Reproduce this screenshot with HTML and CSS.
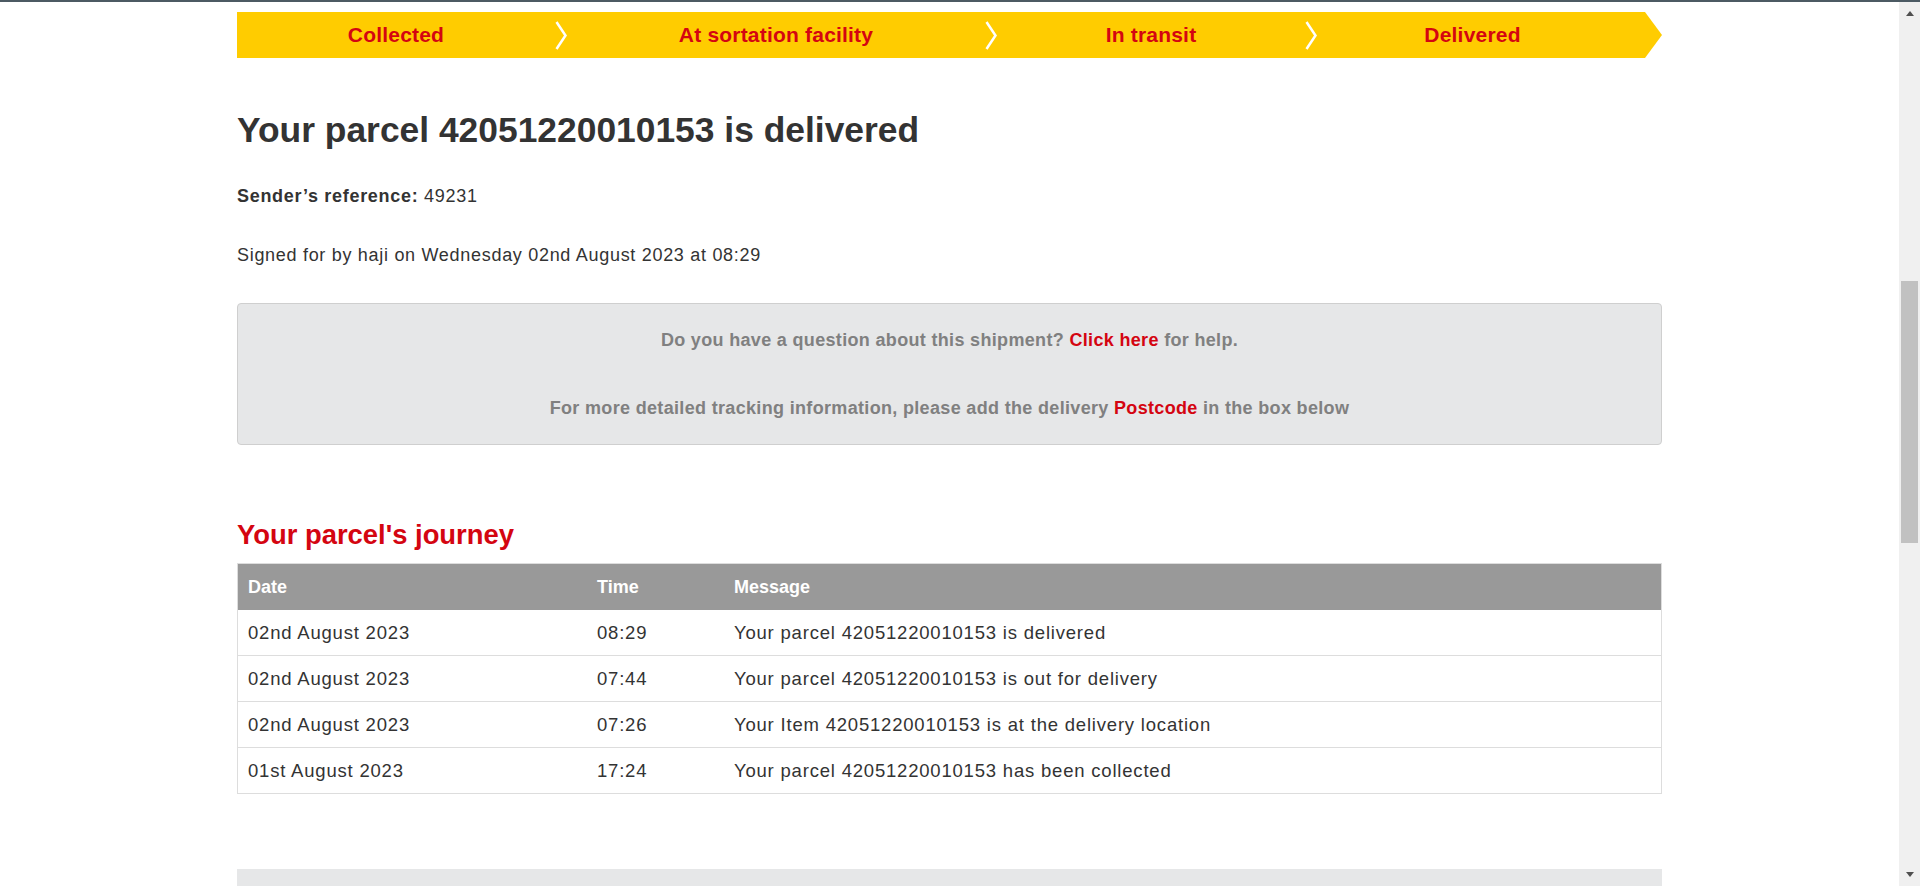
FILE: index.html
```html
<!DOCTYPE html>
<html lang="en">
<head>
<meta charset="utf-8">
<title>Track your parcel</title>
<link rel="stylesheet" href="styles.css">
</head>
<body>
<div class="page">
  <main class="main">
    <div class="container">
      <nav class="progress">
        <div class="step">Collected</div>
        <svg class="chev" viewBox="0 0 12 29" width="12" height="29"><polyline points="1.5,1 10.5,14.5 1.5,28" /></svg>
        <div class="step">At sortation facility</div>
        <svg class="chev" viewBox="0 0 12 29" width="12" height="29"><polyline points="1.5,1 10.5,14.5 1.5,28" /></svg>
        <div class="step">In transit</div>
        <svg class="chev" viewBox="0 0 12 29" width="12" height="29"><polyline points="1.5,1 10.5,14.5 1.5,28" /></svg>
        <div class="step step-last">Delivered</div>
      </nav>

      <h1 class="title">Your parcel 42051220010153 is delivered</h1>
      <p class="ref"><strong>Sender’s reference:</strong> 49231</p>
      <p class="signed">Signed for by haji on Wednesday 02nd August 2023 at 08:29</p>

      <section class="info">
        <p class="info-line">Do you have a question about this shipment? <a class="red" href="#">Click here</a> for help.</p>
        <p class="info-line info-line2">For more detailed tracking information, please add the delivery <span class="red">Postcode</span> in the box below</p>
      </section>

      <h2 class="journey">Your parcel's journey</h2>
      <table class="events">
        <thead>
          <tr><th class="c-date">Date</th><th class="c-time">Time</th><th>Message</th></tr>
        </thead>
        <tbody>
          <tr><td>02nd August 2023</td><td>08:29</td><td>Your parcel 42051220010153 is delivered</td></tr>
          <tr><td>02nd August 2023</td><td>07:44</td><td>Your parcel 42051220010153 is out for delivery</td></tr>
          <tr><td>02nd August 2023</td><td>07:26</td><td>Your Item 42051220010153 is at the delivery location</td></tr>
          <tr><td>01st August 2023</td><td>17:24</td><td>Your parcel 42051220010153 has been collected</td></tr>
        </tbody>
      </table>

      <div class="bottom-box"></div>
    </div>
  </main>
  <div class="scrollbar">
    <div class="sb-btn"><span class="tri-up"></span></div>
    <div class="sb-thumb"></div>
    <div class="sb-btn sb-down"><span class="tri-down"></span></div>
  </div>
</div>
</body>
</html>
```

FILE: styles.css
```css
html, body {
  margin: 0;
  padding: 0;
  height: 886px;
  overflow: hidden;
  background: #fff;
}

body {
  font-family: "Liberation Sans", Arial, sans-serif;
  color: #333;
}

.page {
  height: 884px;
  border-top: 2px solid #4c5a63;
  display: flex;
}

.main {
  flex: 1;
  overflow: hidden;
}

.container {
  width: 1425px;
  margin: 0 auto;
}

/* progress bar */
.progress {
  margin-top: 10px;
  height: 46px;
  background: #ffcc00;
  display: grid;
  grid-template-columns: 318px 12px 418px 12px 308px 12px 1fr;
  align-items: center;
  clip-path: polygon(0 0, calc(100% - 17px) 0, 100% 50%, calc(100% - 17px) 100%, 0 100%);
}

.step {
  text-align: center;
  color: #d40511;
  font-weight: bold;
  font-size: 21px;
  letter-spacing: 0.2px;
}

.step-last {
  padding-right: 34px;
}

.chev {
  display: block;
}

.chev polyline {
  fill: none;
  stroke: #fff;
  stroke-width: 2.5;
}

/* heading & meta */
.title {
  margin: 51px 0 0;
  font-size: 35.4px;
  line-height: 42px;
  font-weight: bold;
  color: #333;
}

.ref,
.signed {
  margin: 33px 0 0;
  font-size: 18px;
  line-height: 24px;
  letter-spacing: 0.7px;
}

.signed {
  margin-top: 35px;
}

/* info box */
.info {
  margin-top: 36px;
  border: 1px solid #cfcfcf;
  border-radius: 4px;
  background: #e6e7e8;
  padding: 24px 0 24px;
}

.info-line {
  margin: 0;
  text-align: center;
  font-size: 18px;
  line-height: 24px;
  font-weight: bold;
  letter-spacing: 0.33px;
  color: #808080;
}

.info-line2 {
  margin-top: 44px;
}

.red {
  color: #d40511;
  text-decoration: none;
}

/* journey */
.journey {
  margin: 74px 0 0;
  font-size: 27.4px;
  line-height: 32px;
  font-weight: bold;
  color: #d40511;
}

.events {
  margin-top: 12px;
  width: 100%;
  border-collapse: separate;
  border-spacing: 0;
  border: 1px solid #dddddd;
  table-layout: fixed;
}

.events th {
  background: #999999;
  color: #fff;
  font-size: 18px;
  font-weight: bold;
  text-align: left;
  height: 46px;
  padding: 0 0 0 10px;
}

.events th.c-date {
  width: 339px;
}

.events th.c-time {
  width: 127px;
}

.events td {
  height: 45px;
  padding: 0 0 0 10px;
  font-size: 18.5px;
  letter-spacing: 0.8px;
  color: #333;
  border-bottom: 1px solid #dddddd;
}

.events tbody tr:last-child td {
  border-bottom: 0;
}

.bottom-box {
  margin-top: 75px;
  height: 60px;
  background: #e6e7e8;
}

/* fake scrollbar */
.scrollbar {
  width: 21px;
  background: #f0f0f0;
  display: flex;
  flex-direction: column;
}

.sb-btn {
  height: 23px;
  display: flex;
  align-items: center;
  justify-content: center;
}

.sb-down {
  margin-top: auto;
}

.tri-up {
  width: 0;
  height: 0;
  border-left: 4.5px solid transparent;
  border-right: 4.5px solid transparent;
  border-bottom: 5px solid #505050;
}

.tri-down {
  width: 0;
  height: 0;
  border-left: 4.5px solid transparent;
  border-right: 4.5px solid transparent;
  border-top: 5px solid #505050;
}

.sb-thumb {
  margin: 256px 2px 0 2px;
  height: 262px;
  background: #c1c1c1;
}
```
